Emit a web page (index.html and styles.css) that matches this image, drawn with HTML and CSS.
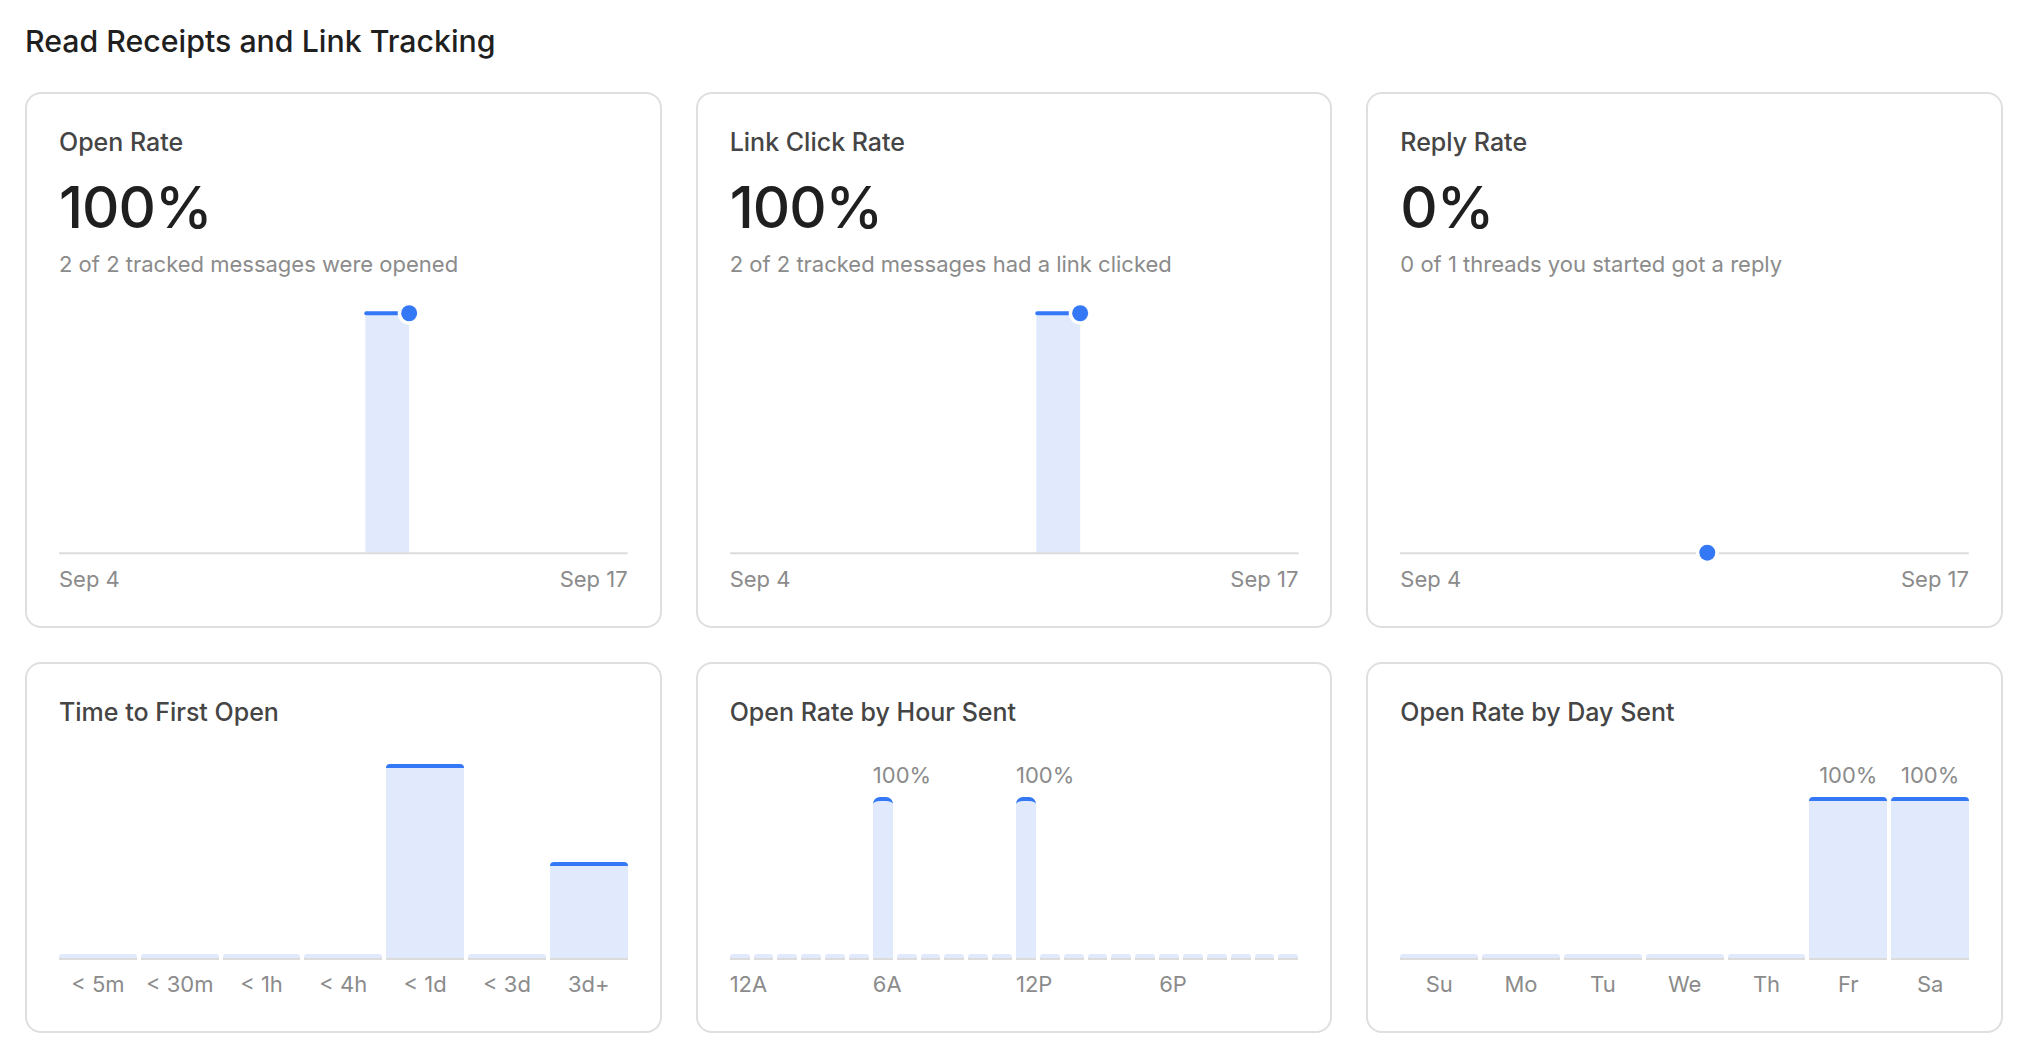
FILE: index.html
```html
<!DOCTYPE html>
<html lang="en">
<head>
    <meta charset="UTF-8">
    <meta name="viewport" content="width=device-width, initial-scale=1.0">
    <title>Read Receipts and Link Tracking</title>
    <link rel="stylesheet" href="styles.css">
</head>
<body>
    <h1 class="page-title">Read Receipts and Link Tracking</h1>

    <div class="cards">
        <!-- Open rate -->
        <div class="card">
            <h2 class="card-title">Open Rate</h2>
            <div class="stat">100%</div>
            <p class="stat-note">2 of 2 tracked messages were opened</p>
            <svg class="line-chart" viewBox="0 0 570 280">
                <rect x="307" y="35" width="44" height="241" fill="#e0eafc"/>
                <line x1="0" y1="275.5" x2="570" y2="275.5" stroke="#dcdcdc" stroke-width="2"/>
                <line x1="308" y1="35" x2="351" y2="35" stroke="#3478f6" stroke-width="4" stroke-linecap="round"/>
                <circle cx="351" cy="35" r="11.5" fill="#fff"/>
                <circle cx="351" cy="35" r="8" fill="#3478f6"/>
            </svg>
            <div class="axis-labels"><span>Sep 4</span><span>Sep 17</span></div>
        </div>

        <!-- Link click rate -->
        <div class="card">
            <h2 class="card-title">Link Click Rate</h2>
            <div class="stat">100%</div>
            <p class="stat-note">2 of 2 tracked messages had a link clicked</p>
            <svg class="line-chart" viewBox="0 0 570 280">
                <rect x="307" y="35" width="44" height="241" fill="#e0eafc"/>
                <line x1="0" y1="275.5" x2="570" y2="275.5" stroke="#dcdcdc" stroke-width="2"/>
                <line x1="308" y1="35" x2="351" y2="35" stroke="#3478f6" stroke-width="4" stroke-linecap="round"/>
                <circle cx="351" cy="35" r="11.5" fill="#fff"/>
                <circle cx="351" cy="35" r="8" fill="#3478f6"/>
            </svg>
            <div class="axis-labels"><span>Sep 4</span><span>Sep 17</span></div>
        </div>

        <!-- Reply rate -->
        <div class="card">
            <h2 class="card-title">Reply Rate</h2>
            <div class="stat">0%</div>
            <p class="stat-note">0 of 1 threads you started got a reply</p>
            <svg class="line-chart" viewBox="0 0 570 280">
                <line x1="0" y1="275.5" x2="570" y2="275.5" stroke="#dcdcdc" stroke-width="2"/>
                <circle cx="308" cy="275" r="11.5" fill="#fff"/>
                <circle cx="308" cy="275" r="8" fill="#3478f6"/>
            </svg>
            <div class="axis-labels"><span>Sep 4</span><span>Sep 17</span></div>
        </div>

        <!-- Time to first open -->
        <div class="card">
            <h2 class="card-title">Time to First Open</h2>
            <div class="bar-chart">
                <div class="col"><div class="plot"><div class="bar empty"></div></div><div class="col-label">&lt; 5m</div></div>
                <div class="col"><div class="plot"><div class="bar empty"></div></div><div class="col-label">&lt; 30m</div></div>
                <div class="col"><div class="plot"><div class="bar empty"></div></div><div class="col-label">&lt; 1h</div></div>
                <div class="col"><div class="plot"><div class="bar empty"></div></div><div class="col-label">&lt; 4h</div></div>
                <div class="col"><div class="plot"><div class="bar" style="height: 196px"></div></div><div class="col-label">&lt; 1d</div></div>
                <div class="col"><div class="plot"><div class="bar empty"></div></div><div class="col-label">&lt; 3d</div></div>
                <div class="col"><div class="plot"><div class="bar" style="height: 98px"></div></div><div class="col-label">3d+</div></div>
            </div>
        </div>

        <!-- Open rate by hour -->
        <div class="card">
            <h2 class="card-title">Open Rate by Hour Sent</h2>
            <div class="bar-chart hours">
                <div class="col"><div class="plot"><div class="bar empty"></div></div><div class="col-label">12A</div></div>
                <div class="col"><div class="plot"><div class="bar empty"></div></div><div class="col-label"></div></div>
                <div class="col"><div class="plot"><div class="bar empty"></div></div><div class="col-label"></div></div>
                <div class="col"><div class="plot"><div class="bar empty"></div></div><div class="col-label"></div></div>
                <div class="col"><div class="plot"><div class="bar empty"></div></div><div class="col-label"></div></div>
                <div class="col"><div class="plot"><div class="bar empty"></div></div><div class="col-label"></div></div>
                <div class="col"><div class="plot"><div class="value">100%</div><div class="bar" style="height: 163px"></div></div><div class="col-label">6A</div></div>
                <div class="col"><div class="plot"><div class="bar empty"></div></div><div class="col-label"></div></div>
                <div class="col"><div class="plot"><div class="bar empty"></div></div><div class="col-label"></div></div>
                <div class="col"><div class="plot"><div class="bar empty"></div></div><div class="col-label"></div></div>
                <div class="col"><div class="plot"><div class="bar empty"></div></div><div class="col-label"></div></div>
                <div class="col"><div class="plot"><div class="bar empty"></div></div><div class="col-label"></div></div>
                <div class="col"><div class="plot"><div class="value">100%</div><div class="bar" style="height: 163px"></div></div><div class="col-label">12P</div></div>
                <div class="col"><div class="plot"><div class="bar empty"></div></div><div class="col-label"></div></div>
                <div class="col"><div class="plot"><div class="bar empty"></div></div><div class="col-label"></div></div>
                <div class="col"><div class="plot"><div class="bar empty"></div></div><div class="col-label"></div></div>
                <div class="col"><div class="plot"><div class="bar empty"></div></div><div class="col-label"></div></div>
                <div class="col"><div class="plot"><div class="bar empty"></div></div><div class="col-label"></div></div>
                <div class="col"><div class="plot"><div class="bar empty"></div></div><div class="col-label">6P</div></div>
                <div class="col"><div class="plot"><div class="bar empty"></div></div><div class="col-label"></div></div>
                <div class="col"><div class="plot"><div class="bar empty"></div></div><div class="col-label"></div></div>
                <div class="col"><div class="plot"><div class="bar empty"></div></div><div class="col-label"></div></div>
                <div class="col"><div class="plot"><div class="bar empty"></div></div><div class="col-label"></div></div>
                <div class="col"><div class="plot"><div class="bar empty"></div></div><div class="col-label"></div></div>
            </div>
        </div>

        <!-- Open rate by day -->
        <div class="card">
            <h2 class="card-title">Open Rate by Day Sent</h2>
            <div class="bar-chart">
                <div class="col"><div class="plot"><div class="bar empty"></div></div><div class="col-label">Su</div></div>
                <div class="col"><div class="plot"><div class="bar empty"></div></div><div class="col-label">Mo</div></div>
                <div class="col"><div class="plot"><div class="bar empty"></div></div><div class="col-label">Tu</div></div>
                <div class="col"><div class="plot"><div class="bar empty"></div></div><div class="col-label">We</div></div>
                <div class="col"><div class="plot"><div class="bar empty"></div></div><div class="col-label">Th</div></div>
                <div class="col"><div class="plot"><div class="value">100%</div><div class="bar" style="height: 163px"></div></div><div class="col-label">Fr</div></div>
                <div class="col"><div class="plot"><div class="value">100%</div><div class="bar" style="height: 163px"></div></div><div class="col-label">Sa</div></div>
            </div>
        </div>
    </div>
</body>
</html>
```

FILE: styles.css
```css
/* Reset */
* {
    box-sizing: border-box;
}

body {
    margin: 0;
    padding: 0 25px;
    font-family: Inter, "Noto Sans", sans-serif;
    background-color: #fff;
    color: #1f1f1f;
}

.page-title {
    font-size: 30.3px;
    font-weight: 500;
    line-height: 36px;
    margin: 23px 0 33px;
}

/* Grid of cards */
.cards {
    display: grid;
    grid-template-columns: repeat(3, 1fr);
    gap: 34px;
}

.card {
    border: 2px solid #dfdfdf;
    border-radius: 16px;
    padding: 33px 32px;
}

.card-title {
    margin: 0;
    font-size: 25px;
    font-weight: 500;
    line-height: 30px;
    color: #454545;
}

.stat {
    margin-top: 21px;
    font-size: 58px;
    font-weight: 500;
    line-height: 58px;
    letter-spacing: -1px;
    color: #1f1f1f;
}

.stat-note {
    margin: 14px 0 0;
    font-size: 22px;
    line-height: 28px;
    color: #8b8b8b;
}

/* Line charts (top row) */
.line-chart {
    display: block;
    width: 100%;
    height: 280px;
    overflow: visible;
}

.axis-labels {
    display: flex;
    justify-content: space-between;
    margin-top: 7px;
    font-size: 22px;
    line-height: 28px;
    color: #8b8b8b;
}

/* Bar charts (bottom row) */
.bar-chart {
    display: flex;
    gap: 4px;
}

.col {
    flex: 1;
    min-width: 0;
    display: flex;
    flex-direction: column;
}

.plot {
    height: 233px;
    display: flex;
    flex-direction: column;
    justify-content: flex-end;
}

.value {
    margin-bottom: 8px;
    font-size: 22px;
    line-height: 28px;
    color: #8b8b8b;
    text-align: center;
    white-space: nowrap;
}

.bar {
    background-color: #e0eafc;
    border-top: 4px solid #3478f6;
    border-bottom: 2px solid #dcdcdc;
    border-radius: 4px 4px 0 0;
}

.bar.empty {
    height: 6px;
    border-top: 0;
    border-radius: 3px 3px 0 0;
}

.col-label {
    margin-top: 10px;
    height: 28px;
    font-size: 22px;
    line-height: 28px;
    color: #8b8b8b;
    text-align: center;
    white-space: nowrap;
}

/* Hour chart: labels start at the bar */
.hours .value,
.hours .col-label {
    text-align: left;
}

.hours .bar {
    border-radius: 7px 7px 0 0;
}

.hours .bar.empty {
    border-radius: 3px 3px 0 0;
}
```
